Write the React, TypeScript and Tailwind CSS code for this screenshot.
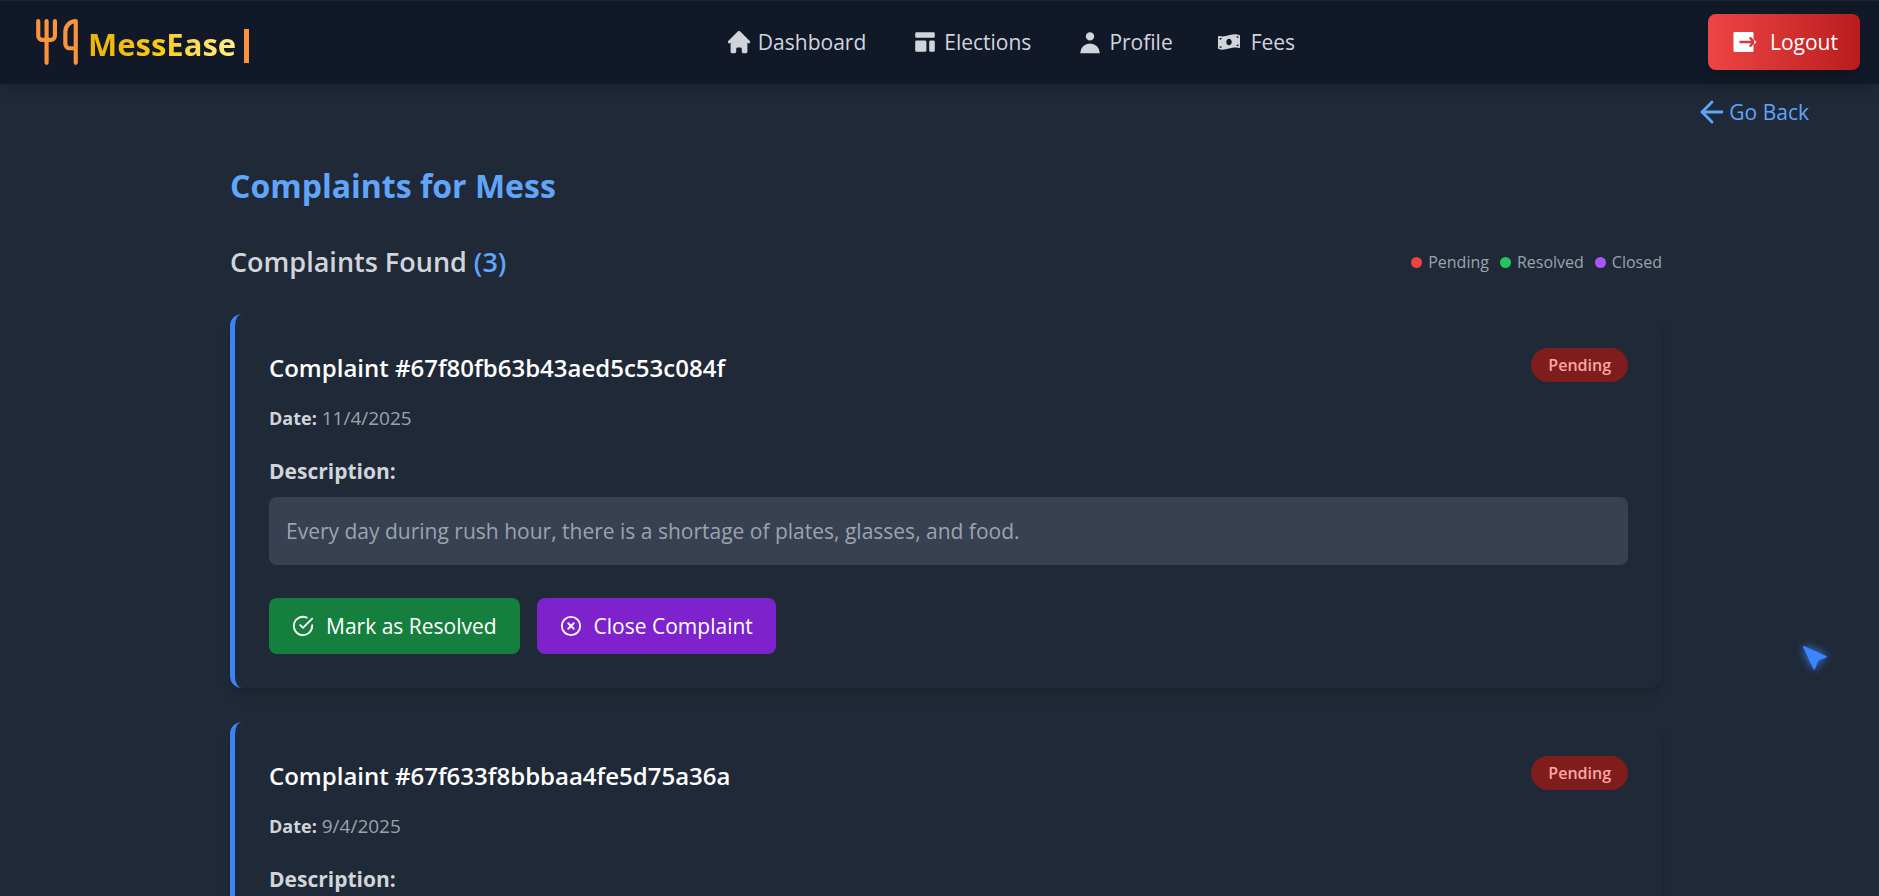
import { FaMoneyBillWave } from "react-icons/fa";
import { FiArrowLeft, FiCheckCircle, FiXCircle } from "react-icons/fi";
import { HiHome, HiTemplate, HiUser } from "react-icons/hi";
import { LuUtensils } from "react-icons/lu";

type Complaint = { id: string; date: string; description: string };

const complaints: Complaint[] = [
  {
    id: "67f80fb63b43aed5c53c084f",
    date: "11/4/2025",
    description:
      "Every day during rush hour, there is a shortage of plates, glasses, and food.",
  },
  {
    id: "67f633f8bbbaa4fe5d75a36a",
    date: "9/4/2025",
    description: "",
  },
];

const legend = [
  { label: "Pending", dot: "bg-[#ef4444]" },
  { label: "Resolved", dot: "bg-[#22c55e]" },
  { label: "Closed", dot: "bg-[#a855f7]" },
];

function LogoutIcon() {
  return (
    <svg viewBox="0 0 28 28" className="size-7" aria-hidden="true">
      <rect x="3.5" y="4" width="20" height="20" rx="1.2" fill="#fff" />
      <path
        d="M10.5 14h12M20.4 10.2 24 14l-3.6 3.8"
        fill="none"
        stroke="#dc3636"
        strokeWidth="2.4"
        strokeLinecap="round"
        strokeLinejoin="round"
      />
      <path d="M24.2 11.4 26.4 14l-2.2 2.6z" fill="#fff" />
    </svg>
  );
}

function Navbar() {
  return (
    <header className="flex h-[84px] items-center justify-between border-t border-[#1d2530] bg-[#111827] pl-8 pr-[19px] pb-0.5 shadow-lg">
      <a href="#home" className="flex min-w-[280px] items-center">
        <LuUtensils className="size-[50px] text-[#fb923c]" />
        <span className="ml-1.5 bg-gradient-to-r from-[#eab308] via-[#facc15] to-[#fef08a] bg-clip-text pt-1 text-[31px] leading-10 font-bold text-transparent">
          MessEase
        </span>
        <span className="mt-2 ml-2 h-[34px] w-[5px] bg-[#fb923c]" />
      </a>
      <nav className="flex items-center gap-[45px] text-[21px] leading-7 text-[#d1d5db]">
        <a href="#dashboard" className="flex items-center gap-[5px]">
          <HiHome className="size-7" />
          Dashboard
        </a>
        <a href="#elections" className="flex items-center gap-[5px]">
          <HiTemplate className="size-7" />
          Elections
        </a>
        <a href="#profile" className="flex items-center gap-[5px]">
          <HiUser className="size-7" />
          Profile
        </a>
        <a href="#fees" className="flex items-center gap-[11px]">
          <FaMoneyBillWave className="size-[22px]" />
          Fees
        </a>
      </nav>
      <button
        type="button"
        className="flex h-14 items-center gap-3 rounded-lg bg-gradient-to-r from-[#ef4444] to-[#b91c1c] px-[22px] text-[21px] leading-7 font-medium text-white shadow-lg"
      >
        <LogoutIcon />
        Logout
      </button>
    </header>
  );
}

function ComplaintCard({ id, date, description }: Complaint) {
  return (
    <article className="rounded-xl border-l-[5px] border-[#3b82f6] bg-[#1f2937] p-[34px] shadow-lg">
      <div className="flex items-start justify-between">
        <h3 className="pt-1 text-2xl leading-8 font-semibold text-white">Complaint #{id}</h3>
        <span className="rounded-full bg-[#7f1d1d] px-[17px] py-[5px] text-base leading-6 font-semibold text-[#fca5a5]">
          Pending
        </span>
      </div>
      <p className="mt-5 text-[19px] leading-7 text-[#9ca3af]">
        <strong className="text-lg leading-7 font-bold text-[#d1d5db]">Date:</strong> {date}
      </p>
      <h4 className="mt-[25px] text-[21px] leading-7 font-bold text-[#d1d5db]">Description:</h4>
      <p className="mt-3 min-h-[68px] rounded-lg bg-[#374151] px-[17px] py-5 text-[21px] leading-7 text-[#9ca3af]">
        {description}
      </p>
      <div className="mt-[33px] flex gap-[17px] text-[21px] leading-7 font-medium text-white">
        <button
          type="button"
          className="flex h-14 items-center gap-3 rounded-lg bg-[#15803d] px-[23px]"
        >
          <FiCheckCircle className="size-[22px]" />
          Mark as Resolved
        </button>
        <button
          type="button"
          className="flex h-14 items-center gap-3 rounded-lg bg-[#7e22ce] px-[23px]"
        >
          <FiXCircle className="size-[22px]" />
          Close Complaint
        </button>
      </div>
    </article>
  );
}

function PointerMark() {
  return (
    <svg
      viewBox="0 0 24 24"
      className="pointer-events-none fixed right-[52px] top-[646px] size-6 overflow-visible drop-shadow-[0_0_5px_#3b82f6]"
      aria-hidden="true"
    >
      <path
        d="M.8.8 23 10.8l-7 2.8c-.8.3-1.4 1-1.8 1.8L11.2 23z"
        fill="#3a86ff"
        stroke="#3a86ff"
        strokeWidth="1.6"
        strokeLinejoin="round"
      />
    </svg>
  );
}

export default function App() {
  return (
    <div className="h-screen overflow-hidden bg-[#1f2937] font-['Open_Sans','Noto_Sans',sans-serif]">
      <Navbar />
      <div className="flex justify-end pr-[70px] pt-[11px]">
        <a href="#back" className="flex items-center text-[21px] leading-8 text-[#60a5fa]">
          <FiArrowLeft className="size-[34px]" />
          Go Back
        </a>
      </div>
      <div className="pl-[13px]">
        <main className="mx-auto w-full max-w-[1432px] pt-[37px]">
          <h1 className="text-[32px] leading-10 font-bold text-[#60a5fa]">Complaints for Mess</h1>
          <div className="mt-9 flex items-center justify-between">
            <h2 className="text-[27px] leading-10 font-semibold text-[#d1d5db]">
              Complaints Found <span className="text-[#60a5fa]">(3)</span>
            </h2>
            <ul className="flex items-center gap-[11px] text-base leading-6 text-[#9ca3af]">
              {legend.map((entry) => (
                <li key={entry.label} className="flex items-center gap-[6px]">
                  <span className={`size-[11px] rounded-full ${entry.dot}`} />
                  {entry.label}
                </li>
              ))}
            </ul>
          </div>
          <div className="mt-8 flex flex-col gap-[34px]">
            {complaints.map((complaint) => (
              <ComplaintCard key={complaint.id} {...complaint} />
            ))}
          </div>
        </main>
      </div>
      <PointerMark />
    </div>
  );
}
